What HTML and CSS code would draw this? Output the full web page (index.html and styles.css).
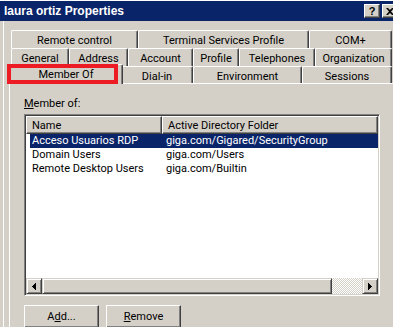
FILE: index.html
```html
<!DOCTYPE html>
<html lang="en">

<head>
    <meta charset="UTF-8">
    <title>laura ortiz Properties</title>
    <link rel="stylesheet" href="styles.css">
</head>

<body>
    <div class="window">
        <div class="titlebar">
            <span class="title">laura ortiz Properties</span>
            <div class="caption-buttons">
                <button type="button" class="cap-btn">?</button>
                <button type="button" class="cap-btn">
                    <svg width="8" height="7" viewBox="0 0 8 7"><path d="M0 0h2l2 2 2-2h2L5 3.5 8 7H6L4 5 2 7H0l3-3.5z" fill="#000"/></svg>
                </button>
            </div>
        </div>

        <div class="frame">
            <div class="tab-rows">
                <div class="tab-row">
                    <div class="tab tab-remote">Remote control</div>
                    <div class="tab tab-terminal">Terminal Services Profile</div>
                    <div class="tab tab-com">COM+</div>
                </div>
                <div class="tab-row">
                    <div class="tab tab-general">General</div>
                    <div class="tab tab-address">Address</div>
                    <div class="tab tab-account">Account</div>
                    <div class="tab tab-profile">Profile</div>
                    <div class="tab tab-phones">Telephones</div>
                    <div class="tab tab-org">Organization</div>
                </div>
                <div class="tab-row front">
                    <div class="tab tab-member active">Member Of</div>
                    <div class="tab tab-dialin">Dial-in</div>
                    <div class="tab tab-env">Environment</div>
                    <div class="tab tab-sessions">Sessions</div>
                </div>
            </div>

            <div class="panel">
                <label class="field-label"><u>M</u>ember of:</label>

                <div class="listview">
                    <div class="lv-header">
                        <div class="lv-head lv-head-name">Name</div>
                        <div class="lv-head lv-head-folder">Active Directory Folder</div>
                    </div>
                    <div class="lv-rows">
                        <div class="lv-row selected">
                            <span class="cell-name">Acceso Usuarios RDP</span>
                            <span>giga.com/Gigared/SecurityGroup</span>
                        </div>
                        <div class="lv-row">
                            <span class="cell-name">Domain Users</span>
                            <span>giga.com/Users</span>
                        </div>
                        <div class="lv-row">
                            <span class="cell-name">Remote Desktop Users</span>
                            <span>giga.com/Builtin</span>
                        </div>
                    </div>
                    <div class="hscroll">
                        <div class="scroll-btn raised">
                            <svg width="4" height="7" viewBox="0 0 4 7"><path d="M3 0h1v7H3zM2 1h1v5H2zM1 2h1v3H1zM0 3h1v1H0z" fill="#000"/></svg>
                        </div>
                        <div class="scroll-thumb raised"></div>
                        <div class="scroll-track"></div>
                        <div class="scroll-btn raised">
                            <svg width="4" height="7" viewBox="0 0 4 7"><path d="M0 0h1v7H0zM1 1h1v5H1zM2 2h1v3H2zM3 3h1v1H3z" fill="#000"/></svg>
                        </div>
                    </div>
                </div>

                <div class="actions">
                    <button type="button" class="push-btn">A<u>d</u>d...</button>
                    <button type="button" class="push-btn"><u>R</u>emove</button>
                </div>
            </div>
        </div>

        <!-- annotation drawn over the screenshot -->
        <div class="mark"></div>
    </div>
</body>

</html>
```

FILE: styles.css
```css
:root {
    --face: #d4d0c8;
    --highlight: #ffffff;
    --shadow: #808080;
    --dark-shadow: #404040;
    --title-blue: #0a246a;
    --select-blue: #0a246a;
    --mark-red: #ed1c24;
}

* {
    box-sizing: border-box;
}

body {
    margin: 0;
    font-family: Roboto, "Liberation Sans", Arial, sans-serif;
    font-size: 11px;
    color: #000;
    background: var(--face);
}

.window {
    position: relative;
    width: 393px;
    height: 327px;
    overflow: hidden;
    background: var(--face);
    border-top: 1px solid var(--highlight);
}

/* title bar */

.titlebar {
    display: flex;
    align-items: center;
    justify-content: space-between;
    height: 20px;
    padding-left: 4px;
    background: var(--title-blue);
    color: #fff;
}

.title {
    font-family: "Liberation Sans", Arial, sans-serif;
    font-weight: bold;
    font-size: 12px;
}

.caption-buttons {
    display: flex;
    gap: 2px;
    margin-right: -5px;
}

.cap-btn {
    display: flex;
    align-items: center;
    justify-content: center;
    width: 16px;
    height: 14px;
    padding: 0;
    border: 1px solid;
    border-color: var(--highlight) var(--dark-shadow) var(--dark-shadow) var(--highlight);
    box-shadow: inset -1px -1px 0 var(--shadow);
    background: var(--face);
    font-family: "Liberation Sans", Arial, sans-serif;
    font-weight: bold;
    font-size: 11px;
    line-height: 12px;
    color: #000;
}

/* dialog body */

.frame {
    height: 306px;
    margin-left: 3px;
    padding: 9px 0 0 5px;
    border-left: 1px solid var(--highlight);
}

.tab-rows {
    margin-left: 2px;
}

.tab-row {
    display: flex;
    height: 18px;
}

.tab-row.front {
    height: 17px;
}

.tab {
    flex: none;
    height: 100%;
    padding-top: 2px;
    border-top: 1px solid var(--highlight);
    border-left: 1px solid var(--highlight);
    border-right: 1px solid var(--dark-shadow);
    border-radius: 2px 2px 0 0;
    box-shadow: inset -1px 0 0 var(--shadow);
    background: var(--face);
    text-align: center;
    line-height: 15px;
    white-space: nowrap;
}

.tab.active {
    position: relative;
    height: 20px;
    margin: -2px -2px 0 -2px;
}

.tab-remote { width: 127px; }
.tab-terminal { width: 171px; }
.tab-com { width: 83px; }

.tab-general { width: 58px; }
.tab-address { width: 59px; }
.tab-account { width: 65px; }
.tab-profile { width: 46px; }
.tab-phones { width: 76px; }
.tab-org { width: 77px; }

.tab-member { width: 110px; }
.tab-member.active { width: 114px; }
.tab-dialin { width: 72px; }
.tab-env { width: 109px; }
.tab-sessions { width: 90px; }

.panel {
    height: 300px;
    padding: 13px 0 0 14px;
    border-top: 1px solid var(--highlight);
    border-left: 1px solid var(--highlight);
}

.field-label {
    display: block;
    line-height: 13px;
    margin-bottom: 4px;
}

/* list view */

.listview {
    display: flex;
    flex-direction: column;
    width: 356px;
    height: 182px;
    padding: 1px;
    border: 1px solid;
    border-color: var(--shadow) var(--highlight) var(--highlight) var(--shadow);
    box-shadow: inset 1px 1px 0 var(--dark-shadow), inset -1px -1px 0 var(--face);
    background: #fff;
}

.lv-header {
    display: flex;
    height: 18px;
}

.lv-head {
    height: 18px;
    padding: 2px 0 0 5px;
    border-top: 1px solid var(--highlight);
    border-left: 1px solid var(--highlight);
    border-bottom: 1px solid var(--dark-shadow);
    border-right: 1px solid var(--dark-shadow);
    box-shadow: inset -1px -1px 0 var(--shadow);
    background: var(--face);
    line-height: 14px;
    white-space: nowrap;
}

.lv-head-name {
    width: 136px;
}

.lv-head-folder {
    flex: 1;
}

.lv-rows {
    flex: 1;
}

.lv-row {
    display: flex;
    height: 14px;
    margin-left: 4px;
    line-height: 14px;
    white-space: nowrap;
}

.lv-row.selected {
    background: var(--select-blue);
    color: #fff;
}

.cell-name {
    width: 136px;
    padding-left: 2px;
}

/* scroll bar */

.raised {
    border: 1px solid;
    border-color: var(--face) var(--dark-shadow) var(--dark-shadow) var(--face);
    box-shadow: inset 1px 1px 0 var(--highlight), inset -1px -1px 0 var(--shadow);
    background: var(--face);
}

.hscroll {
    display: flex;
    height: 16px;
}

.scroll-btn {
    display: flex;
    align-items: center;
    justify-content: center;
    width: 16px;
    height: 16px;
}

.scroll-thumb {
    width: 290px;
    height: 16px;
}

.scroll-track {
    flex: 1;
    background: repeating-conic-gradient(var(--face) 0 25%, #fff 0 50%) 0 0 / 2px 2px;
}

/* buttons */

.actions {
    display: flex;
    gap: 7px;
    margin-top: 9px;
}

.push-btn {
    width: 75px;
    height: 23px;
    padding: 0 0 1px;
    border: 1px solid;
    border-color: var(--highlight) var(--dark-shadow) var(--dark-shadow) var(--highlight);
    box-shadow: inset -1px -1px 0 var(--shadow);
    background: var(--face);
    font-family: Roboto, "Liberation Sans", Arial, sans-serif;
    font-size: 11px;
    color: #000;
}

/* red highlight box */

.mark {
    position: absolute;
    left: 7px;
    top: 63px;
    width: 111px;
    height: 20px;
    border: 4px solid var(--mark-red);
}
```
